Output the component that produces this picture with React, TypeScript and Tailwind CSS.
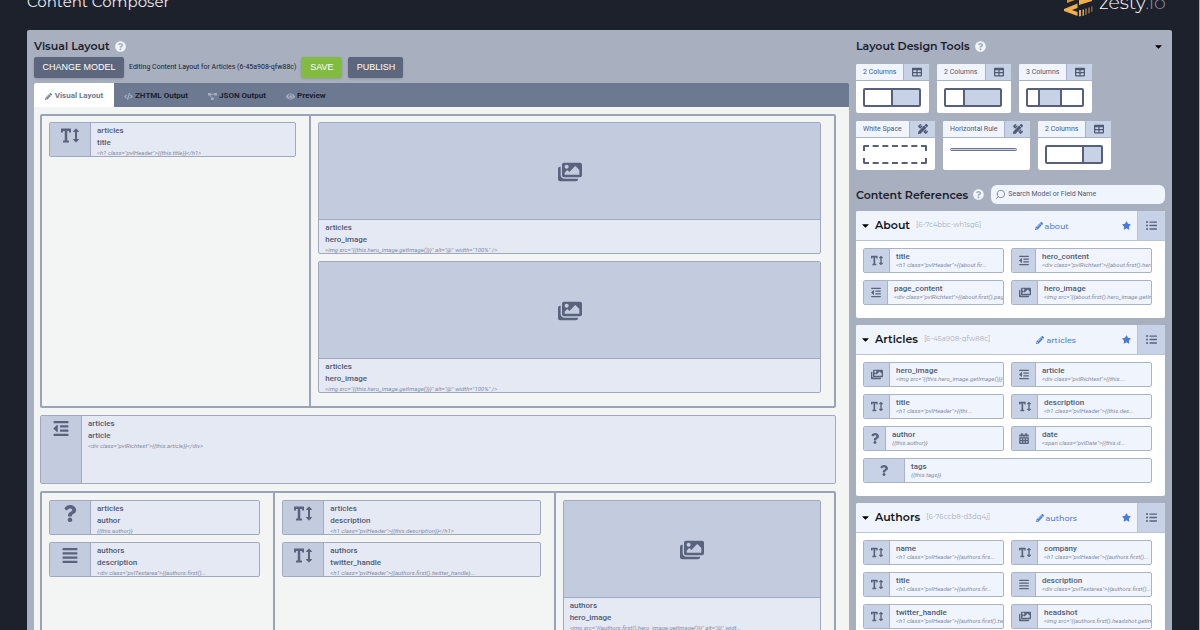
import type { ReactNode } from 'react';
import { Search } from 'lucide-react';
import {
  FaCalendarAlt,
  FaCaretDown,
  FaAlignJustify,
  FaCode,
  FaEye,
  FaImages,
  FaListUl,
  FaOutdent,
  FaPencilAlt,
  FaPencilRuler,
  FaProjectDiagram,
  FaQuestion,
  FaQuestionCircle,
  FaStar,
  FaTable,
  FaTextHeight,
} from 'react-icons/fa';

const icons = {
  text: FaTextHeight,
  image: FaImages,
  rich: FaOutdent,
  area: FaAlignJustify,
  question: FaQuestion,
  date: FaCalendarAlt,
};

type IconName = keyof typeof icons;

interface Field {
  icon: IconName;
  name: string;
  code: string;
  iconWidth: string;
  wide?: boolean;
}

interface Model {
  name: string;
  zuid: string;
  slug: string;
  fields: Field[];
}

const models: Model[] = [
  {
    name: 'About',
    zuid: '[6-7c4bbc-wh1sg6]',
    slug: 'about',
    fields: [
      { icon: 'text', name: 'title', code: '<h1 class="pvlHeader">{{about.fir...', iconWidth: 'w-[26px]' },
      { icon: 'rich', name: 'hero_content', code: '<div class="pvlRichtext">{{about.first().hero_content}}</div>', iconWidth: 'w-6' },
      { icon: 'rich', name: 'page_content', code: '<div class="pvlRichtext">{{about.first().page_content}}</div>', iconWidth: 'w-6' },
      { icon: 'image', name: 'hero_image', code: '<img src="{{about.first().hero_image.getImage()}}" />', iconWidth: 'w-[26px]' },
    ],
  },
  {
    name: 'Articles',
    zuid: '[6-45a908-qfw88c]',
    slug: 'articles',
    fields: [
      { icon: 'image', name: 'hero_image', code: '<img src="{{this.hero_image.getImage()}}" />', iconWidth: 'w-[26px]' },
      { icon: 'rich', name: 'article', code: '<div class="pvlRichtext">{{this....', iconWidth: 'w-6' },
      { icon: 'text', name: 'title', code: '<h1 class="pvlHeader">{{thi...', iconWidth: 'w-[26px]' },
      { icon: 'text', name: 'description', code: '<h1 class="pvlHeader">{{this.des...', iconWidth: 'w-[26px]' },
      { icon: 'question', name: 'author', code: '{{this.author}}', iconWidth: 'w-[22px]' },
      { icon: 'date', name: 'date', code: '<span class="pvlDate">{{this.d...', iconWidth: 'w-6' },
      { icon: 'question', name: 'tags', code: '{{this.tags}}', iconWidth: 'w-[41px]', wide: true },
    ],
  },
  {
    name: 'Authors',
    zuid: '[6-76ccb8-d3dq4j]',
    slug: 'authors',
    fields: [
      { icon: 'text', name: 'name', code: '<h1 class="pvlHeader">{{authors.firs...', iconWidth: 'w-[26px]' },
      { icon: 'text', name: 'company', code: '<h1 class="pvlHeader">{{authors.first()...', iconWidth: 'w-[26px]' },
      { icon: 'text', name: 'title', code: '<h1 class="pvlHeader">{{authors.fir...', iconWidth: 'w-[26px]' },
      { icon: 'area', name: 'description', code: '<div class="pvlTextarea">{{authors.first()...', iconWidth: 'w-6' },
      { icon: 'text', name: 'twitter_handle', code: '<h1 class="pvlHeader">{{authors.first().twitter', iconWidth: 'w-[26px]' },
      { icon: 'image', name: 'headshot', code: '<img src="{{authors.first().headshot.getImage()}}" />', iconWidth: 'w-[26px]' },
    ],
  },
];

const tabs = [
  { label: 'ZHTML Output', icon: FaCode },
  { label: 'JSON Output', icon: FaProjectDiagram },
  { label: 'Preview', icon: FaEye },
];

const PanelTitle = ({ children }: { children: ReactNode }) => (
  <h2 className="flex shrink-0 items-center gap-[5px] font-[Montserrat,Inter,sans-serif] text-[11px] leading-[14px] font-semibold text-[#1b202c]">
    {children}
    <FaQuestionCircle className="h-[11px] w-[11px] text-[#f0f4fd]" />
  </h2>
);

const BlockText = ({ model, name, code }: { model: string; name: string; code: string }) => (
  <div className="min-w-0 overflow-hidden px-[6px] pt-[2px] text-[8px] leading-3 font-medium text-[#4f5a75]">
    <p>{model}</p>
    <p>{name}</p>
    <p className="truncate text-[6px] leading-[7px] font-normal text-[#848ca3] italic">{code}</p>
  </div>
);

interface BlockProps {
  icon: IconName;
  model: string;
  name: string;
  code: string;
  tall?: boolean;
}

const Block = ({ icon, model, name, code, tall }: BlockProps) => {
  const Icon = icons[icon];
  return (
    <div className={`flex overflow-hidden rounded-xs border border-[#a0a9c0] bg-[#e5e9f4] ${tall ? 'h-[69px]' : 'h-[35px]'}`}>
      <div className="flex w-[41px] shrink-0 justify-center border-r border-[#a0a9c0] bg-[#c3cbdf] pt-1">
        <Icon className="h-[17px] w-[18px] text-[#59637c]" />
      </div>
      <BlockText model={model} name={name} code={code} />
    </div>
  );
};

const ImageBlock = ({ model, code }: { model: string; code: string }) => (
  <div className="h-[132px] overflow-hidden rounded-xs border border-[#a0a9c0] bg-[#e5e9f4]">
    <div className="flex h-[97px] items-center justify-center border-b border-[#a0a9c0] bg-[#c3cbdf] pt-[2px]">
      <FaImages className="h-6 w-6 text-[#59637c]" />
    </div>
    <BlockText model={model} name="hero_image" code={code} />
  </div>
);

const ToolCard = ({ label, width, ruler, children }: { label: string; width: string; ruler?: boolean; children: ReactNode }) => {
  const Icon = ruler ? FaPencilRuler : FaTable;
  return (
    <div className={`h-[49px] overflow-hidden rounded-xs bg-white ${width}`}>
      <div className="flex h-[17px] border-b border-[#a9b2c8] bg-[#f0f4fd] text-[7px] text-[#4f5a75]">
        <span className="flex flex-1 items-center pl-[7px] whitespace-nowrap">{label}</span>
        <span className="flex w-[26px] items-center justify-center border-l border-[#a9b2c8] bg-[#c8d2e6]">
          <Icon className="h-[10px] w-[10px]" />
        </span>
      </div>
      <div className="px-[7px] pt-[7px]">{children}</div>
    </div>
  );
};

const Columns = ({ parts }: { parts: string[] }) => (
  <div className="flex h-[19px] w-[58px] divide-x-2 divide-[#56607b] overflow-hidden rounded-xs border-2 border-[#56607b]">
    {parts.map((part, i) => (
      <div key={i} className={part} />
    ))}
  </div>
);

const Reference = ({ field }: { field: Field }) => {
  const Icon = icons[field.icon];
  return (
    <div className={`flex h-[25px] overflow-hidden rounded-xs border border-[#aab3c9] bg-[#f0f4fd] ${field.wide ? 'col-span-2' : ''}`}>
      <div className={`flex shrink-0 items-center justify-center border-r border-[#aab3c9] bg-[#c8d2e6] ${field.iconWidth}`}>
        <Icon className="h-[11px] w-[12px] text-[#59637c]" />
      </div>
      <div className="min-w-0 pt-[3px] pl-[6px] whitespace-nowrap">
        <p className="text-[8px] leading-[10px] font-medium text-[#4f5a75]">{field.name}</p>
        <p className="text-[6px] leading-[6px] text-[#848ca3] italic">{field.code}</p>
      </div>
    </div>
  );
};

const ModelCard = ({ model }: { model: Model }) => (
  <section className="overflow-hidden rounded-xs bg-white">
    <div className="flex h-[30px] items-stretch border-b border-[#b9c2d6] bg-[#f0f4fd] font-[Montserrat,Inter,sans-serif]">
      <div className="flex flex-1 items-center px-[6px]">
        <FaCaretDown className="h-[11px] w-[7px] text-black" />
        <h3 className="ml-[6px] text-[11px] font-semibold text-[#11151f]">{model.name}</h3>
        <span className="ml-[6px] text-[7px] text-[#a7aebd]">{model.zuid}</span>
        <a href={`#${model.slug}`} className="flex flex-1 items-center justify-center gap-[2px] text-[8px] font-medium text-[#4a7bdc]">
          <FaPencilAlt className="h-2 w-2" />
          {model.slug}
        </a>
        <FaStar className="h-[9px] w-[9px] text-[#4a7bdc]" />
      </div>
      <div className="flex w-7 items-center justify-center border-l border-[#b9c2d6] bg-[#c8d2e6]">
        <FaListUl className="h-[11px] w-[11px] text-[#59637c]" />
      </div>
    </div>
    <div className="grid grid-cols-2 gap-[7px] pt-[7px] pr-[13px] pb-[13px] pl-[7px]">
      {model.fields.map((field) => (
        <Reference key={field.name} field={field} />
      ))}
    </div>
  </section>
);

const ZestyLogo = () => (
  <svg viewBox="0 0 104 17" className="h-[17px] w-[104px]" role="img" aria-label="zesty.io">
    <path fill="#d9962f" d="M3 0h8L3 3Z" />
    <path fill="#efb04a" d="M15 0h13v1L15 5Z" />
    <path fill="#efb04a" d="M0 9 13.500 3.500V8L8 10l5.500 2v4L0 11Z" />
    <path fill="#e0a548" d="M15 10h2v6l-2 .5ZM18.500 9.500h1.500v6l-1.500.5ZM21.500 8.500h1v6l-1 .5ZM24.500 7.500h1v5.500l-1 .5ZM27.500 6.500h.8v5l-.8.5Z" />
    <text x="35" y="9" fill="#fff" fontFamily="Montserrat, Inter, sans-serif" fontSize="19" fontWeight="300">
      zesty<tspan fill="#8d929e">.io</tspan>
    </text>
  </svg>
);

export default function App() {
  return (
    <div className="h-screen overflow-hidden border-r border-[#a8afbf] bg-[#1d212c] px-[27px] font-[Roboto,sans-serif] text-[#1b202c]">
      <header className="flex h-[30px] items-start justify-between pr-1">
        <h1 className="font-[Montserrat,Inter,sans-serif] text-[15px] leading-[4px] text-[#e9ebf0]">Content Composer</h1>
        <ZestyLogo />
      </header>

      <main className="flex rounded-t-xs bg-[#a8afbf] px-[7px] pt-[9px]">
        <div className="min-w-0 flex-1">
          <PanelTitle>Visual Layout</PanelTitle>
          <div className="mt-1 flex items-center font-['Liberation_Sans',sans-serif] text-[9px] text-white">
            <button type="button" className="h-[21px] w-[90px] rounded-xs bg-[#5c667d] shadow">CHANGE MODEL</button>
            <p className="mx-[5px] font-[Roboto,sans-serif] text-[7px] text-[#1b202c]">Editing Content Layout for Articles (6-45a908-qfw88c)</p>
            <button type="button" className="h-[21px] w-[41px] rounded-xs bg-[#81bb3f] shadow">SAVE</button>
            <button type="button" className="ml-[6px] h-[21px] w-[55px] rounded-xs bg-[#5c667d] shadow">PUBLISH</button>
          </div>

          <nav className="mt-[5px] flex h-6 overflow-hidden rounded-t-xs bg-[#6d7991] text-[8px] font-bold">
            <button type="button" className="flex w-20 items-center justify-center gap-[3px] bg-white pt-[2px] text-[#6d7991]">
              <FaPencilAlt className="h-[7px] w-[7px]" />
              Visual Layout
            </button>
            {tabs.map(({ label, icon: Icon }) => (
              <button key={label} type="button" className="flex items-center gap-[2px] px-[10px] pt-[2px]">
                <Icon className="h-[9px] w-[9px] text-[#a8afbf]" />
                {label}
              </button>
            ))}
          </nav>

          <div className="space-y-[7px] bg-[#f3f4f4] pt-[7px] pr-[13px] pl-[6px]">
            <div className="grid h-[294px] grid-cols-[269fr_522fr] rounded-xs border-2 border-[#9aa3b8]">
              <div className="min-w-0 border-r-2 border-[#9aa3b8] pt-[6px] pr-[13px] pl-[7px]">
                <Block icon="text" model="articles" name="title" code={'<h1 class="pvlHeader">{{this.title}}</h1>'} />
              </div>
              <div className="min-w-0 space-y-[7px] pt-[6px] pr-[13px] pl-[7px]">
                <ImageBlock model="articles" code={'<img src="{{this.hero_image.getImage()}}" alt="@" width="100%" />'} />
                <ImageBlock model="articles" code={'<img src="{{this.hero_image.getImage()}}" alt="@" width="100%" />'} />
              </div>
            </div>

            <Block tall icon="rich" model="articles" name="article" code={'<div class="pvlRichtext">{{this.article}}</div>'} />

            <div className="grid h-[294px] grid-cols-[233fr_280fr_278fr] divide-x-2 divide-[#9aa3b8] rounded-xs border-2 border-[#9aa3b8]">
              <div className="min-w-0 space-y-[7px] pt-[7px] pr-[13px] pl-[7px]">
                <Block icon="question" model="articles" name="author" code="{{this.author}}" />
                <Block icon="area" model="authors" name="description" code={'<div class="pvlTextarea">{{authors.first()...'} />
              </div>
              <div className="min-w-0 space-y-[7px] pt-[7px] pr-[13px] pl-[7px]">
                <Block icon="text" model="articles" name="description" code={'<h1 class="pvlHeader">{{this.description}}</h1>'} />
                <Block icon="text" model="authors" name="twitter_handle" code={'<h1 class="pvlHeader">{{authors.first().twitter_handle}...'} />
              </div>
              <div className="min-w-0 pt-[7px] pr-[13px] pl-[7px]">
                <ImageBlock model="authors" code={'<img src="{{authors.first().hero_image.getImage()}}" alt="@" widt...'} />
              </div>
            </div>
          </div>
        </div>

        <aside className="ml-[7px] w-[309px] shrink-0">
          <div className="flex items-center justify-between pr-[3px]">
            <PanelTitle>Layout Design Tools</PanelTitle>
            <FaCaretDown className="h-[11px] w-[7px] text-black" />
          </div>

          <div className="mt-[11px] flex flex-wrap gap-2">
            <ToolCard label="2 Columns" width="w-[73px]">
              <Columns parts={['flex-1', 'flex-1 bg-[#c8d2e6]']} />
            </ToolCard>
            <ToolCard label="2 Columns" width="w-[74px]">
              <Columns parts={['flex-1', 'flex-2 bg-[#c8d2e6]']} />
            </ToolCard>
            <ToolCard label="3 Columns" width="w-[73px]">
              <Columns parts={['flex-1', 'flex-2 bg-[#c8d2e6]', 'flex-2']} />
            </ToolCard>
            <ToolCard label="White Space" width="w-[79px]" ruler>
              <div className="h-[19px] w-16 rounded-xs border-2 border-dashed border-[#56607b]" />
            </ToolCard>
            <ToolCard label="Horizontal Rule" width="w-[87px]" ruler>
              <div className="mt-[3px] h-[3px] w-[67px] rounded-xs border border-[#6d7690] bg-[#c8d2e6]" />
            </ToolCard>
            <ToolCard label="2 Columns" width="w-[73px]">
              <Columns parts={['flex-2', 'flex-1 bg-[#c8d2e6]']} />
            </ToolCard>
          </div>

          <div className="mt-[15px] flex items-center gap-[7px]">
            <PanelTitle>Content References</PanelTitle>
            <label className="flex h-[19px] min-w-0 flex-1 items-center gap-[2px] rounded-md bg-[#f0f4fd] px-1">
              <Search className="h-[11px] w-[11px] -scale-x-100 text-[#7d869c]" />
              <input type="text" aria-label="Search Model or Field Name" placeholder="Search Model or Field Name" className="min-w-0 flex-1 text-[7px] outline-none placeholder:text-[#4f5a75]" />
            </label>
          </div>

          <div className="mt-[7px] space-y-[7px]">
            {models.map((model) => (
              <ModelCard key={model.name} model={model} />
            ))}
          </div>
        </aside>
      </main>
    </div>
  );
}
